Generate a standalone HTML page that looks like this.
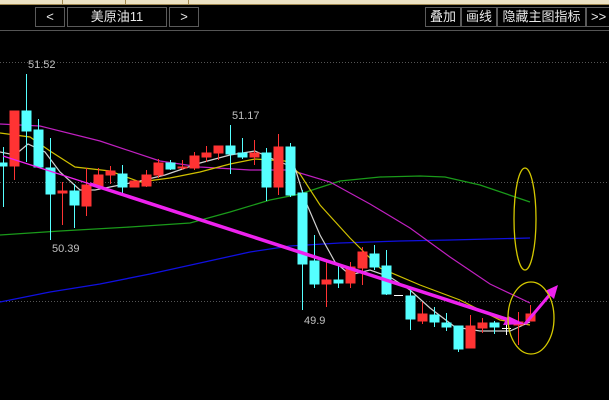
<!DOCTYPE html>
<html><head><meta charset="utf-8"><style>
html,body{margin:0;padding:0;background:#000;width:609px;height:400px;overflow:hidden;font-family:"Liberation Sans","Noto Sans CJK SC",sans-serif}
.b{position:absolute;top:7px;height:18px;border:1px solid #5a5a5a;color:#e8e8e8;font-size:13px;line-height:18px;text-align:center;box-sizing:content-box}
</style></head><body>
<div style="position:absolute;left:0;top:0;width:609px;height:4px;background:#ece2c4;border-bottom:1px solid #a08850"></div>
<div style="position:absolute;left:62px;top:0;width:1px;height:4px;background:#a08850"></div>
<div style="position:absolute;left:125px;top:0;width:1px;height:4px;background:#a08850"></div>
<div style="position:absolute;left:188px;top:0;width:1px;height:4px;background:#a08850"></div>
<div class="b" style="left:35px;width:28px">&lt;</div>
<div class="b" style="left:67px;width:98px">美原油11</div>
<div class="b" style="left:169px;width:28px">&gt;</div>
<div class="b" style="left:425px;width:34px">叠加</div>
<div class="b" style="left:461px;width:34px">画线</div>
<div class="b" style="left:497px;width:87px">隐藏主图指标</div>
<div class="b" style="left:586px;width:30px;text-align:left;padding-left:4px">&gt;&gt;</div>
<svg width="609" height="400" style="position:absolute;left:0;top:0">
<line x1="0" y1="30.5" x2="609" y2="30.5" stroke="#555"/>
<g stroke="#555" stroke-dasharray="1,2"><line x1="0" y1="62.5" x2="609" y2="62.5"/><line x1="0" y1="182.5" x2="609" y2="182.5"/><line x1="0" y1="301.5" x2="609" y2="301.5"/></g>
<g fill="#c0c0c0" font-size="11" font-family="Liberation Sans"><text x="28" y="68">51.52</text><text x="52" y="252">50.39</text><text x="232" y="119">51.17</text><text x="304" y="324">49.9</text></g>
<polyline fill="none" stroke="#1a9a1a" stroke-width="1.3" points="0,235 60,231 130,227 190,223 230,212 270,200 300,194 340,181 380,177 420,176 445,177 480,185 530,202"/>
<polyline fill="none" stroke="#1010e0" stroke-width="1.3" points="0,302 50,292 100,284 150,274 200,263 250,252 290,246 340,243 400,241 450,240 530,238"/>
<polyline fill="none" stroke="#c020c0" stroke-width="1.2" points="0,124 40,126 100,141 160,161 200,167 250,170 290,170 330,182 370,204 410,228 450,257 490,284 530,303"/>
<polyline fill="none" stroke="#d0c000" stroke-width="1.2" points="0,133 30,137 50,151 75,167 110,171 140,182 170,178 200,172 230,164 255,159 285,161 300,174 320,205 350,238 380,268 420,285 460,300 500,320 530,325"/>
<polyline fill="none" stroke="#d0d0d0" stroke-width="1.2" points="0,152 15,155 28,144 45,152 60,172 80,190 95,190 115,186 140,181 165,175 200,163 230,155 255,151 275,160 295,168 305,200 320,235 335,262 350,275 370,270 390,277 410,290 430,308 455,327 480,331 510,331 530,322"/>
<g stroke="#ff3333" fill="#ff3333">
<line x1="14.5" y1="111" x2="14.5" y2="180"/><rect x="10" y="111" width="9" height="55"/>
<line x1="62.5" y1="182" x2="62.5" y2="225"/><rect x="58" y="191" width="9" height="2"/>
<line x1="86.5" y1="168" x2="86.5" y2="216"/><rect x="82" y="185" width="9" height="21"/>
<line x1="98.5" y1="168" x2="98.5" y2="186"/><rect x="94" y="175" width="9" height="11"/>
<line x1="110.5" y1="166" x2="110.5" y2="184"/><rect x="106" y="171" width="9" height="4"/>
<rect x="130" y="181" width="9" height="6"/>
<line x1="146.5" y1="170" x2="146.5" y2="187"/><rect x="142" y="175" width="9" height="11"/>
<line x1="158.5" y1="159" x2="158.5" y2="178"/><rect x="154" y="163" width="9" height="12"/>
<line x1="182.5" y1="160" x2="182.5" y2="170"/><rect x="178" y="167" width="9" height="1"/>
<line x1="194.5" y1="152" x2="194.5" y2="170"/><rect x="190" y="156" width="9" height="12"/>
<line x1="206.5" y1="146" x2="206.5" y2="162"/><rect x="202" y="153" width="9" height="4"/>
<line x1="218.5" y1="146" x2="218.5" y2="160"/><rect x="214" y="146" width="9" height="7"/>
<line x1="254.5" y1="140" x2="254.5" y2="165"/><rect x="250" y="153" width="9" height="4"/>
<line x1="278.5" y1="134" x2="278.5" y2="195"/><rect x="274" y="147" width="9" height="40"/>
<line x1="326.5" y1="262" x2="326.5" y2="307"/><rect x="322" y="280" width="9" height="4"/>
<line x1="350.5" y1="262" x2="350.5" y2="288"/><rect x="346" y="267" width="9" height="16"/>
<line x1="362.5" y1="247" x2="362.5" y2="285"/><rect x="358" y="252" width="9" height="16"/>
<line x1="422.5" y1="302" x2="422.5" y2="324"/><rect x="418" y="314" width="9" height="7"/>
<line x1="470.5" y1="315" x2="470.5" y2="348"/><rect x="466" y="326" width="9" height="22"/>
<line x1="482.5" y1="318" x2="482.5" y2="333"/><rect x="478" y="323" width="9" height="5"/>
<line x1="518.5" y1="312" x2="518.5" y2="345"/><rect x="514" y="322" width="9" height="3"/>
<line x1="530.5" y1="305" x2="530.5" y2="321"/><rect x="526" y="314" width="9" height="7"/>
</g>
<g stroke="#55ffff" fill="#55ffff">
<line x1="3.5" y1="147" x2="3.5" y2="207"/><rect x="0" y="163" width="7" height="3"/>
<line x1="26.5" y1="74" x2="26.5" y2="162"/><rect x="22" y="111" width="9" height="20"/>
<line x1="38.5" y1="119" x2="38.5" y2="167"/><rect x="34" y="130" width="9" height="37"/>
<line x1="50.5" y1="138" x2="50.5" y2="240"/><rect x="46" y="168" width="9" height="26"/>
<line x1="74.5" y1="184" x2="74.5" y2="228"/><rect x="70" y="191" width="9" height="14"/>
<line x1="122.5" y1="165" x2="122.5" y2="194"/><rect x="118" y="174" width="9" height="13"/>
<line x1="170.5" y1="160" x2="170.5" y2="170"/><rect x="166" y="163" width="9" height="6"/>
<line x1="230.5" y1="125" x2="230.5" y2="174"/><rect x="226" y="146" width="9" height="8"/>
<line x1="242.5" y1="138" x2="242.5" y2="159"/><rect x="238" y="153" width="9" height="4"/>
<line x1="266.5" y1="148" x2="266.5" y2="201"/><rect x="262" y="153" width="9" height="34"/>
<line x1="290.5" y1="143" x2="290.5" y2="197"/><rect x="286" y="147" width="9" height="48"/>
<line x1="302.5" y1="190" x2="302.5" y2="310"/><rect x="298" y="193" width="9" height="71"/>
<line x1="314.5" y1="235" x2="314.5" y2="288"/><rect x="310" y="261" width="9" height="23"/>
<line x1="338.5" y1="266" x2="338.5" y2="288"/><rect x="334" y="280" width="9" height="3"/>
<line x1="374.5" y1="245" x2="374.5" y2="270"/><rect x="370" y="254" width="9" height="13"/>
<line x1="386.5" y1="250" x2="386.5" y2="295"/><rect x="382" y="266" width="9" height="28"/>
<line x1="410.5" y1="290" x2="410.5" y2="330"/><rect x="406" y="296" width="9" height="23"/>
<line x1="434.5" y1="307" x2="434.5" y2="327"/><rect x="430" y="315" width="9" height="7"/>
<line x1="446.5" y1="313" x2="446.5" y2="331"/><rect x="442" y="323" width="9" height="4"/>
<line x1="458.5" y1="326" x2="458.5" y2="352"/><rect x="454" y="326" width="9" height="23"/>
<line x1="494.5" y1="321" x2="494.5" y2="334"/><rect x="490" y="323" width="9" height="4"/>
</g>
<line x1="394" y1="295.5" x2="403" y2="295.5" stroke="#fff"/>
<line x1="502" y1="328.5" x2="511" y2="328.5" stroke="#fff"/><line x1="506.5" y1="322" x2="506.5" y2="335" stroke="#fff"/>
<line x1="3" y1="156" x2="90" y2="184" stroke="#ee22ee" stroke-width="1.3"/>
<line x1="90" y1="184" x2="512" y2="321" stroke="#ee22ee" stroke-width="3.5"/>
<polygon points="525,324 503,325 508,316" fill="#ee22ee"/>
<line x1="525" y1="324" x2="552" y2="292" stroke="#ee22ee" stroke-width="3"/>
<polygon points="558,285 554,299 545,291" fill="#ee22ee"/>
<ellipse cx="525" cy="219" rx="11" ry="51" fill="none" stroke="#d4c800" stroke-width="1.3"/>
<ellipse cx="531" cy="318" rx="23" ry="36" fill="none" stroke="#d4c800" stroke-width="1.3"/>
</svg>
</body></html>
